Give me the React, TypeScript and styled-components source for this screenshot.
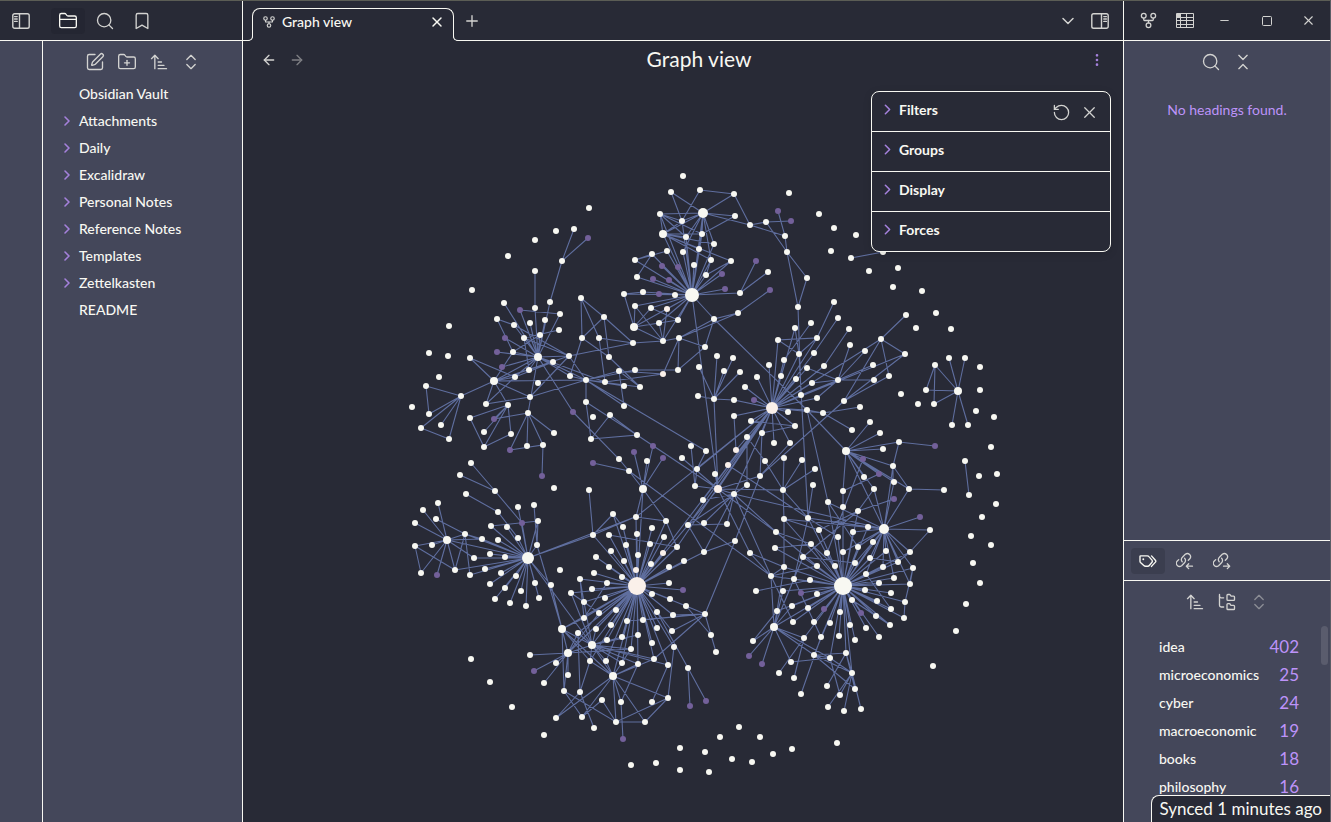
import React from "react";
import styled, { createGlobalStyle } from "styled-components";
import {
  ArrowLeft,
  ArrowRight,
  ArrowUpNarrowWide,
  Bookmark,
  ChevronDown,
  ChevronRight,
  ChevronsDownUp,
  ChevronsUpDown,
  EllipsisVertical,
  FolderClosed,
  FolderPlus,
  FolderTree,
  GitFork,
  Minus,
  Plus,
  RotateCcw,
  Search,
  Square,
  SquarePen,
  X,
} from "lucide-react";

const color = {
  dark: "#282a36",
  panel: "#44475a",
  line: "#f8f8f2",
  text: "#f8f8f2",
  icon: "#d3d3d1",
  accent: "#bd93f9",
  chevron: "#a581dc",
  edge: "#6272a4",
  ghost: "#73609a",
  blush: "#faf0ea",
};

const GlobalStyle = createGlobalStyle`
  *, *::before, *::after { box-sizing: border-box; }
  body {
    margin: 0;
    background: ${color.dark};
    color: ${color.text};
    font-family: Lato, "Open Sans", sans-serif;
    font-size: 14px;
    line-height: 20px;
  }
  button { font: inherit; color: inherit; background: none; border: 0; padding: 0; cursor: pointer; }
  ul { list-style: none; margin: 0; padding: 0; }
`;

const Window = styled.div`
  display: flex;
  height: 100vh;
  min-height: 600px;
  position: relative;
  overflow: hidden;
  border-top: 1px solid #5b5d55;
  border-right: 1px solid #5b5d66;
`;

const LeftSide = styled.aside`
  display: flex;
  flex-direction: column;
  flex: 0 0 243px;
  border-right: 1px solid ${color.line};
  background: ${color.panel};
`;

const RightSide = styled.aside`
  display: flex;
  flex-direction: column;
  flex: 0 0 207px;
  min-width: 0;
  border-left: 1px solid ${color.line};
  background: ${color.panel};
`;

const Main = styled.main`
  display: flex;
  flex-direction: column;
  flex: 1;
  min-width: 0;
  position: relative;
`;

const Bar = styled.div<{ $pad?: string; $plain?: boolean }>`
  display: flex;
  align-items: center;
  flex: 0 0 40px;
  gap: 3px;
  padding: ${(p) => p.$pad ?? "0 4px"};
  border-bottom: 1px solid ${color.line};
  background: ${(p) => (p.$plain ? "transparent" : color.dark)};
`;

const Spacer = styled.span<{ $w?: number }>`
  flex: ${(p) => (p.$w ? `0 0 ${p.$w}px` : "1")};
`;

const IconButton = styled.button<{ $w?: number; $active?: boolean; $dim?: boolean; $tone?: string }>`
  display: inline-flex;
  align-items: center;
  justify-content: center;
  flex: 0 0 ${(p) => p.$w ?? 34}px;
  height: 26px;
  border-radius: 4px;
  color: ${(p) => p.$tone ?? (p.$active ? color.text : color.icon)};
  background: ${(p) => (p.$active ? "rgba(24, 24, 32, 0.18)" : "transparent")};
  opacity: ${(p) => (p.$dim ? 0.5 : 1)};
`;

const LeftBody = styled.div`
  display: flex;
  flex: 1;
`;

const Ribbon = styled.div`
  flex: 0 0 43px;
  border-right: 1px solid ${color.line};
`;

const Explorer = styled.nav`
  flex: 1;
`;

const Toolbar = styled.div`
  display: flex;
  justify-content: center;
  padding: 8px 0 5px;
`;

const TreeRow = styled.button`
  display: flex;
  align-items: center;
  width: 100%;
  height: 27px;
  padding-left: 16px;
  font-weight: 500;
  text-align: left;
`;

const Twisty = styled.span`
  display: flex;
  flex: 0 0 20px;
  color: ${color.chevron};
`;

const Tab = styled.div`
  display: flex;
  align-items: center;
  align-self: flex-end;
  position: relative;
  flex: 0 1 202px;
  height: 33px;
  margin: 0 0 -1px 9px;
  padding: 0 7px 6px 9px;
  border: 1px solid ${color.line};
  border-bottom: 0;
  border-radius: 8px 8px 0 0;
  background: ${color.dark};
  font-weight: 500;
  &::before,
  &::after {
    content: "";
    position: absolute;
    bottom: 0;
    width: 8px;
    height: 8px;
    border: 0 solid ${color.line};
    border-bottom-width: 1px;
    clip-path: inset(0);
  }
  &::before {
    left: -8px;
    border-right-width: 1px;
    border-bottom-right-radius: 5px;
    box-shadow: 3px 3px 0 0 ${color.dark};
  }
  &::after {
    right: -8px;
    border-left-width: 1px;
    border-bottom-left-radius: 5px;
    box-shadow: -3px 3px 0 0 ${color.dark};
  }
`;

const TabTitle = styled.span`
  flex: 1;
  padding-left: 6px;
`;

const ViewHeader = styled.header`
  display: flex;
  align-items: center;
  flex: 0 0 38px;
  padding: 0 12px;
`;

const ViewTitle = styled.h1`
  flex: 1;
  margin: 0;
  padding: 0 0 2px 4px;
  font-size: 21px;
  line-height: 28px;
  font-weight: 400;
  text-align: center;
`;

const Nav = styled.div`
  display: flex;
`;

const Canvas = styled.svg`
  display: block;
  flex: 1;
  width: 100%;
  min-height: 0;
`;

const Controls = styled.section`
  position: absolute;
  top: 90px;
  right: 12px;
  width: 240px;
  border: 1px solid ${color.line};
  border-radius: 8px;
  background: ${color.dark};
  box-shadow: 0 2px 8px rgba(0, 0, 0, 0.12);
`;

const ControlRow = styled.div`
  display: flex;
  align-items: center;
  height: 40px;
  padding: 0 7px 4px;
  & + & {
    border-top: 1px solid ${color.line};
  }
  &:first-child {
    height: 39px;
  }
`;

const ControlToggle = styled.button`
  display: flex;
  align-items: center;
  flex: 1;
  font-weight: 700;
  text-align: left;
`;

const ControlActions = styled.div`
  display: flex;
  padding-top: 6px;
`;

const Outline = styled.section`
  flex: 1;
  min-height: 0;
`;

const Empty = styled.p`
  margin: 20px 0 0;
  text-align: center;
  color: ${color.accent};
`;

const TagPane = styled.section`
  display: flex;
  flex-direction: column;
  flex: 0 0 282px;
  min-height: 0;
  border-top: 1px solid ${color.line};
`;

const TagScroll = styled.div`
  display: flex;
  flex: 1;
  min-height: 0;
  overflow: hidden;
  padding-top: 6px;
`;

const TagList = styled.ul`
  flex: 1;
  padding: 7px 22px 0 35px;
`;

const TagRow = styled.li`
  display: flex;
  align-items: center;
  justify-content: space-between;
  height: 28px;
  font-weight: 500;
`;

const Count = styled.span`
  font-size: 17px;
  font-weight: 400;
  color: ${color.accent};
`;

const Thumb = styled.div`
  flex: 0 0 7px;
  height: 39px;
  margin-right: 2px;
  border-radius: 4px;
  background: #5a5c6d;
`;

const Status = styled.footer`
  position: absolute;
  right: 0;
  bottom: 0;
  height: 27px;
  padding: 0 8px 0 7px;
  border: 1px solid ${color.line};
  border-width: 1px 0 0 1px;
  border-top-left-radius: 8px;
  background: ${color.dark};
  font-size: 17px;
  line-height: 26px;
`;

const outline = { fill: "none", stroke: "currentColor", strokeLinecap: "round", strokeLinejoin: "round" } as const;

const SidebarIcon = ({ flip }: { flip?: boolean }) => (
  <svg width="18" height="16" viewBox="0 0 18 16" {...outline} strokeWidth="1.4" aria-hidden>
    <g transform={flip ? "matrix(-1 0 0 1 18 0)" : undefined}>
      <rect x="0.8" y="0.8" width="16.4" height="14.4" rx="1.8" />
      <path d="M7.5 1v14M2.6 3.6h2.6M2.6 6h2.6M2.6 8.4h2.6" />
    </g>
  </svg>
);

const TableIcon = () => (
  <svg width="18" height="15" viewBox="0 0 18 15" fill="none" stroke="currentColor" strokeWidth="1" aria-hidden>
    <path d="M.5.5h17v14H.5zM.5 4.5h17M.5 7.5h17M.5 11.5h17M4.5.5v14M10.5.5v14" />
    <path d="M1 1h3v3H1z" fill="currentColor" />
  </svg>
);

const TagsIcon = () => (
  <svg width="18" height="14" viewBox="0 0 18 14" {...outline} strokeWidth="1.4" aria-hidden>
    <path d="M1 2.6v4.6c0 .5.2.9.5 1.2l3.3 3.1c.5.5 1.1.7 1.8.7h2.2c.6 0 1.1-.2 1.5-.7L13 8.2c.5-.6.5-1.5 0-2.1L9.9 2.6c-.4-.5-.9-.7-1.500-.7H1.700c-.4 0-.7.300-.7.700z" />
    <path d="M12.500 1.900l3.900 4.300c.5.600.5 1.300 0 1.900l-3.900 4.300" />
    <path d="M4.300 5.200v.1" strokeWidth="1.900" />
  </svg>
);

const LinkIcon = ({ out }: { out?: boolean }) => (
  <svg width="18" height="18" viewBox="0 0 18 18" {...outline} strokeWidth="1.3" aria-hidden>
    <path d="M6.200 9.800a3.200 3.200 0 0 1 .2-4.600l2.900-2.900a3.200 3.200 0 0 1 4.500 4.500l-1.500 1.500" />
    <path d="M8.600 6.200a3.200 3.200 0 0 1-.1 4.600l-2.900 2.900a3.200 3.200 0 0 1-4.500-4.500l1.600-1.600" />
    <path d={out ? "M10.500 14.200h6M14.300 11.800l2.400 2.400-2.400 2.400" : "M16.500 14.200h-6M12.700 11.800l-2.400 2.400 2.400 2.400"} />
  </svg>
);

const folders = ["Attachments", "Daily", "Excalidraw", "Personal Notes", "Reference Notes", "Templates", "Zettelkasten"];

const tags: [string, number][] = [
  ["idea", 402],
  ["microeconomics", 25],
  ["cyber", 24],
  ["macroeconomic", 19],
  ["books", 18],
  ["philosophy", 16],
];

/* Notes, as "x,y" pairs in graph space */
const notes = `
535,240 508,256 562,261 535,271 472,290 550,302 504,303 535,308 560,314 497,319 545,320 530,323 514,325 449,326 559,330 540,335
524,338 581,298 604,317 582,338 599,338 633,343 609,357 569,356 513,352 553,362 429,353 448,356 470,358 529,370 439,377 515,377
538,383 570,376 605,382 619,371 635,370 624,386 640,387 426,386 461,396 412,407 429,414 421,428 441,425 449,439 486,404 508,405
530,397 528,413 470,418 484,432 511,434 484,447 527,446 543,445 554,433 586,402 593,417 610,415 624,406 637,435 591,439 619,459
629,471 471,463 460,475 574,229 556,231 589,208 683,176 671,192 700,190 734,194 660,214 735,216 682,221 702,234 686,237 750,225
766,222 789,193 819,214 834,228 831,251 785,236 787,252 714,244 699,249 683,252 667,251 652,254 635,260 694,265 711,260 731,261
706,275 637,277 675,295 643,292 624,294 740,293 768,272 807,278 798,307 635,306 651,308 659,323 678,320 663,341 679,338 714,319
738,313 705,347 678,370 699,367 717,356 733,358 724,371 740,372 698,396 714,399 734,400 745,387 757,377 769,365 778,340 781,376
784,360 795,328 799,354 811,323 796,379 801,395 807,368 812,383 814,353 817,338 824,366 817,398 834,302 838,318 734,416 751,421
788,412 807,410 823,413 795,426 762,433 747,437 774,443 790,443 691,446 706,451 682,458 765,461 784,458 802,460 815,469 697,469
715,474 760,476 695,486 747,485 813,485 703,500 828,502 647,461 613,514 636,517 666,521 623,527 652,528 688,525 704,523 727,524
784,519 819,530 776,532 609,535 637,534 664,537 626,545 650,544 611,551 638,555 677,547 735,541 704,552 750,553 775,548 811,544
803,557 827,553 838,537 817,566 784,567 835,566 771,576 794,579 684,561 669,567 651,564 624,561 609,567 622,577 495,491 466,494
498,512 554,488 438,503 423,510 415,523 436,519 465,534 415,546 432,545 421,573 455,570 470,575 474,558 482,539 491,526 507,527
518,507 534,505 538,521 518,538 498,540 537,545 490,554 505,557 485,569 501,573 516,576 535,583 551,585 490,584 505,588 521,591
495,599 510,603 526,606 539,598 589,490 593,535 596,557 594,573 580,579 560,570 607,583 592,589 571,593 605,598 584,602 616,610
599,613 584,618 627,621 611,625 596,629 578,633 607,640 622,637 638,635 631,649 590,661 606,661 622,663 638,664 530,655 556,663
544,683 568,675 564,691 580,692 602,700 621,702 582,717 556,718 594,728 616,722 471,659 490,682 512,707 544,735 669,583 652,594
670,599 686,606 657,612 673,615 705,614 643,620 657,628 672,631 711,635 716,652 652,643 674,647 654,659 668,665 688,668 652,702
668,698 645,722 739,727 720,737 760,737 680,748 705,752 792,749 773,754 732,759 752,762 656,763 631,765 680,770 709,772 756,591
856,235 851,258 883,252 898,268 869,271 893,287 922,291 849,329 936,313 951,329 916,328 906,315 881,339 905,354 889,376 850,345
865,351 873,365 874,380 844,401 860,407 852,430 901,394 918,404 934,404 926,390 935,365 949,358 965,358 980,367 980,390 976,411
994,417 952,425 968,425 991,447 870,422 880,433 883,449 899,442 893,466 864,477 965,461 979,476 997,474 843,491 874,489 894,482
909,489 944,490 930,530 843,507 858,511 853,532 868,527 843,552 858,547 873,542 886,551 870,558 855,563 883,567 898,562 910,552
913,568 894,578 910,584 866,574 879,583 810,580 783,591 817,594 865,590 852,600 877,601 891,593 905,602 891,609 904,618 876,616
890,625 808,608 792,606 777,611 793,622 814,622 830,623 840,612 850,625 866,628 879,637 855,640 839,636 821,637 804,638 753,641
791,662 779,673 794,678 801,694 814,655 830,658 846,653 852,673 855,689 827,686 840,695 828,707 844,711 861,709 969,495 996,504
982,517 971,536 991,545 973,563 980,583 966,604 956,631 933,666 837,743`;

const ghosts = `
588,238 520,310 505,338 497,352 502,367 494,419 510,450 573,412 634,452 593,463 542,476 778,211 791,221 662,266 678,267 722,274
653,279 669,280 659,294 725,289 756,261 770,290 754,400 653,446 663,458 522,523 437,575 534,671 623,739 683,590 690,706 706,701
935,446 863,459 879,474 894,499 920,517 801,593 861,613 824,609 749,656 762,664`;

const blushNotes = "667,309 663,374 736,450 728,465 663,553 636,570";

const hubs: [number, number, number, boolean?][] = [
  [703, 213, 5], [692, 295, 7], [663, 234, 4], [634, 327, 4], [538, 357, 4], [494, 381, 4], [586, 380, 3], [838, 380, 3],
  [958, 391, 4], [846, 451, 4], [643, 489, 4], [734, 494, 3], [783, 490, 3], [808, 518, 3], [447, 540, 4], [528, 558, 6],
  [884, 529, 5], [843, 586, 9], [562, 629, 4], [592, 645, 4], [568, 653, 4], [613, 676, 4], [774, 627, 4],
  [772, 408, 6, true], [718, 489, 4, true], [637, 586, 9, true],
];

/* First point is the hub, the others are linked to it */
const fans = [
  "562,261 574,229 588,238 550,302",
  "538,357 550,302 535,308 504,303 520,310 560,314 545,320 530,323 514,325 540,335 524,338 505,338 497,352 513,352 569,356 553,362 570,376 586,380 529,370 502,367 494,381 573,412 528,413 605,382 515,377",
  "494,381 513,352 461,396 486,404 508,405 470,358 530,397 586,380 553,362 569,356 515,377",
  "508,405 470,418 484,432 484,447 511,434 494,419",
  "528,413 510,450 527,446 543,445 554,433 494,419",
  "461,396 426,386 429,414 421,428 441,425 449,439",
  "586,380 605,382 619,371 624,386 640,387 635,370 624,406 586,402 570,376 569,356 706,451",
  "692,295 703,213 663,234 682,221 702,234 686,237 714,244 699,249 683,252 667,251 652,254 635,260 662,266 678,267 694,265 711,260 731,261 722,274 706,275 637,277 653,279 669,280 659,294 675,295 643,292 624,294 725,289 740,293 635,306 651,308 667,309 659,323 678,320 634,327 663,341 714,319 718,489 660,214",
  "703,213 671,192 734,194 735,216 750,225 660,214 682,221 663,234 702,234 686,237 699,249 711,260 714,244 683,252",
  "663,234 660,214 682,221 686,237 702,234 714,244 699,249 711,260 731,261",
  "660,214 682,221 702,234 686,237",
  "634,327 659,323 678,320 651,308 663,341 635,306 624,294",
  "679,338 714,319 738,313 705,347 678,370 663,374 663,341",
  "714,399 717,356 733,358 724,371 740,372 699,367 698,396 734,400 718,489",
  "772,408 745,387 757,377 769,365 778,340 781,376 784,360 795,328 799,354 796,379 801,395 807,368 812,383 814,353 817,338 824,366 838,380 817,398 734,400 788,412 807,410 823,413 795,426 790,443 774,443 762,433 751,421 734,416 747,437 754,400 718,489 734,494 703,500 637,586 688,525 677,547 697,469 728,465 736,450 636,517 905,354 881,339",
  "643,489 634,452 653,446 647,461 663,458 629,471 666,521 637,586 636,517",
  "718,489 695,486 734,494 783,490 715,474 682,458 750,553 776,532 637,586 760,476",
  "734,494 704,523 727,524 704,552 703,500 688,525 884,529 771,576 747,485 776,532",
  "783,490 765,461 784,458 802,460 815,469 784,519 808,518",
  "838,380 850,345 865,351 873,365 874,380 817,398 801,395 807,368 812,383",
  "844,401 881,339 889,376 905,354 760,476",
  "881,339 906,315 905,354 889,376",
  "807,410 846,451 828,502 714,319 823,413",
  "823,413 860,407 852,430",
  "958,391 935,365 949,358 965,358 926,390 934,404 952,425 968,425",
  "846,451 870,422 880,433 883,449 899,442 863,459 893,466 879,474 864,477 874,489 894,482 909,489 843,491",
  "447,540 438,503 423,510 415,523 465,534 415,546 432,545 421,573 437,575 455,570 482,539 528,558 474,558",
  "465,534 436,519 455,570 470,575 482,539 528,558",
  "528,558 491,526 507,527 518,538 522,523 518,507 538,521 498,540 490,554 505,557 474,558 485,569 501,573 516,576 535,583 551,585 490,584 505,588 521,591 495,599 510,603 526,606 539,598 455,570 470,575 537,545 593,535 635,517 592,645 482,539",
  "593,535 635,517 589,490 613,514 637,586",
  "562,629 564,691 568,653 592,645 613,676 551,585 537,545 637,586 590,661",
  "568,653 530,655 556,663 534,671 544,683 564,691 578,633 568,675 592,645 637,586 607,640 599,613 631,649",
  "592,645 590,661 606,661 622,663 631,649 638,635 622,637 584,602 571,593 613,676 596,629 638,664 654,659 668,665 578,633 607,640",
  "613,676 590,661 556,718 582,717 616,722 621,702 645,722 668,698 638,664 606,661 637,586 631,649 654,659",
  "705,614 673,615 686,606 711,635 672,631 643,620 654,659 735,541 627,621",
  "637,586 636,517 613,514 623,527 652,528 609,535 637,534 664,537 626,545 650,544 611,551 638,555 663,553 677,547 684,561 669,567 651,564 624,561 609,567 622,577 636,570 596,557 594,573 607,583 592,589 571,593 605,598 584,602 616,610 599,613 584,618 627,621 611,625 596,629 578,633 607,640 622,637 638,635 631,649 590,661 606,661 622,663 638,664 669,583 683,590 652,594 670,599 686,606 657,612 673,615 643,620 657,628 672,631 652,643 674,647 654,659 668,665 580,579 592,645 704,552 666,521",
  "884,529 920,517 930,530 868,527 873,542 858,547 886,551 870,558 898,562 910,552 913,568 883,567 894,578 855,563 874,489 893,466 894,482 909,489 808,518 846,451 843,552 853,532 910,584 866,574 827,502 784,519",
  "843,586 784,567 794,579 810,580 783,591 801,593 817,594 865,590 852,600 877,601 891,593 905,602 891,609 904,618 876,616 890,625 861,613 824,609 808,608 792,606 793,622 814,622 830,623 840,612 850,625 866,628 879,637 855,640 839,636 821,637 804,638 910,584 913,568 894,578 866,574 879,583 883,567 898,562 910,552 886,551 870,558 855,563 873,542 858,547 843,552 827,553 838,537 853,532 868,527 835,566 817,566 803,557 811,544 808,518 819,530 771,576 777,611 774,627 884,529 814,655 830,658 846,653 852,673 775,548 843,507 843,491 784,519 858,511",
  "774,627 753,641 749,656 762,664 791,662 804,638 777,611 783,591 814,655 830,658 792,606 794,579 803,557 771,576",
  "852,673 846,653 830,658 814,655 844,711 828,707 861,709 840,695",
];

/* Runs of notes linked one after the other */
const chains = [
  "535,271 535,308", "520,310 560,314", "514,325 497,319 513,352 540,335", "514,325 569,356 524,338 559,330", "524,338 529,370",
  "470,358 515,377", "515,377 486,404 530,397 586,380", "515,377 553,362", "530,397 569,356", "470,418 484,447 511,434",
  "510,450 543,445 542,476", "426,386 429,414", "421,428 449,439", "582,338 581,298 604,317 582,338 609,357 604,317 633,343",
  "581,298 599,338 633,343", "582,338 570,376", "599,338 605,382", "569,356 633,343 663,341", "609,357 640,387 619,371 624,406",
  "586,402 637,435 591,439 586,402", "591,439 610,415 637,435 718,489", "573,412 619,459 629,471 771,576", "593,463 629,471",
  "663,374 605,382", "619,371 663,374", "635,370 678,370 705,347 714,319 738,313 770,290", "671,192 682,221 700,190 734,194 750,225 785,236",
  "735,216 702,234", "750,225 766,222 791,221", "766,222 787,252 785,236 778,211", "787,252 807,278 798,307 787,252",
  "798,307 801,395", "795,328 799,354 808,518", "667,251 635,260 652,254 637,277", "756,261 740,293 768,272", "711,260 706,275 731,261",
  "624,294 643,292", "659,323 663,341 667,309", "651,308 678,320", "635,306 663,341", "799,354 778,340 817,338 799,354",
  "834,302 817,338", "838,318 814,353", "849,329 824,366", "811,323 784,360", "691,446 695,486 697,469 706,451",
  "747,437 747,485", "747,437 765,461", "762,433 760,476 790,443", "762,433 795,426 751,421", "734,416 736,450",
  "760,476 735,541", "728,465 808,518", "784,519 784,567 771,576 750,553 784,567", "688,525 727,524", "688,525 704,552 735,541",
  "636,517 666,521 677,547", "609,535 677,547", "613,514 623,527", "471,463 495,491 460,475", "495,491 522,523", "466,494 498,512 518,538",
  "415,546 421,573", "415,546 455,570", "491,526 538,521 537,545 534,505", "578,633 580,692 594,728", "580,579 584,618 607,583",
  "571,593 584,602 599,613", "580,579 584,602", "584,618 562,629", "582,717 564,691 616,722 668,698 645,722 616,722 602,700 582,717",
  "556,718 580,692 590,661", "621,702 623,739", "621,702 638,664", "711,635 716,652", "686,606 711,635", "657,612 688,668 690,706", "688,668 706,701",
  "674,647 668,698", "668,665 652,702", "613,676 668,698", "851,258 883,252", "926,390 935,365 934,404", "935,446 899,442 893,466 909,489 944,490",
  "909,489 884,529", "893,466 893,482", "863,459 827,553", "879,474 843,491", "874,489 858,511 803,557", "894,499 858,511 819,530",
  "930,530 910,552", "913,568 905,602 904,618", "913,568 910,584", "965,461 969,495", "813,485 808,518 794,579", "828,502 858,547",
  "776,532 811,544", "775,548 811,544 835,566", "776,532 817,566", "784,519 819,530", "756,591 810,580", "771,576 817,566",
  "771,576 793,622", "794,579 821,637", "753,641 777,611 784,567", "791,662 830,658 814,655 846,653 827,686", "779,673 804,638 794,678",
  "801,694 821,637", "846,653 855,689 852,673", "814,655 855,689", "843,586 852,673", "830,658 840,695", "910,552 898,562 870,558",
  "808,518 868,527", "808,518 838,537", "828,502 843,586", "876,616 852,600 890,625", "866,574 891,609", "855,563 803,557",
];

const points = (text: string) => text.trim().split(/\s+/).map((p) => p.split(",").map(Number));

const fanPath = (text: string) => {
  const [hub, ...rest] = points(text);
  return rest.map(([x, y]) => `M${hub[0]} ${hub[1]}L${x} ${y}`).join("");
};

const chainPath = (text: string) => "M" + points(text).map((p) => p.join(" ")).join("L");

const edgePath = fans.map(fanPath).join("") + chains.map(chainPath).join("");

const Dots = ({ at, fill }: { at: string; fill: string }) => (
  <g fill={fill}>
    {points(at).map(([x, y], i) => (
      <circle key={i} cx={x} cy={y} r={3} />
    ))}
  </g>
);

const Graph = () => (
  <Canvas viewBox="243 79 880 743" role="img" aria-label="Graph of linked notes">
    <path d={edgePath} fill="none" stroke={color.edge} strokeWidth="1.1" strokeOpacity="0.95" />
    <Dots at={ghosts} fill={color.ghost} />
    <Dots at={notes} fill={color.text} />
    <Dots at={blushNotes} fill={color.blush} />
    {hubs.map(([x, y, r, blush]) => (
      <circle key={`${x}-${y}`} cx={x} cy={y} r={r} fill={blush ? color.blush : color.text} />
    ))}
  </Canvas>
);

const stroke = { size: 20, strokeWidth: 1.6 };

export default function App() {
  return (
    <>
      <GlobalStyle />
      <Window>
        <LeftSide>
          <Bar>
            <IconButton aria-label="Collapse sidebar"><SidebarIcon /></IconButton>
            <Spacer $w={7} />
            <IconButton aria-label="Files" $active><FolderClosed {...stroke} /></IconButton>
            <IconButton aria-label="Search"><Search {...stroke} /></IconButton>
            <IconButton aria-label="Bookmarks"><Bookmark {...stroke} /></IconButton>
          </Bar>
          <LeftBody>
            <Ribbon />
            <Explorer aria-label="File explorer">
              <Toolbar>
                <IconButton $w={32} aria-label="New note"><SquarePen {...stroke} /></IconButton>
                <IconButton $w={32} aria-label="New folder"><FolderPlus {...stroke} /></IconButton>
                <IconButton $w={32} aria-label="Change sort order"><ArrowUpNarrowWide {...stroke} /></IconButton>
                <IconButton $w={32} aria-label="Expand all"><ChevronsUpDown {...stroke} /></IconButton>
              </Toolbar>
              <TreeRow><Twisty />Obsidian Vault</TreeRow>
              {folders.map((name) => (
                <TreeRow key={name}>
                  <Twisty><ChevronRight size={16} strokeWidth={2.4} /></Twisty>
                  {name}
                </TreeRow>
              ))}
              <TreeRow><Twisty />README</TreeRow>
            </Explorer>
          </LeftBody>
        </LeftSide>

        <Main>
          <Bar $pad="0 6px 0 0">
            <Tab>
              <GitFork size={14} strokeWidth={2} color={color.icon} />
              <TabTitle>Graph view</TabTitle>
              <IconButton $w={18} $tone={color.text} aria-label="Close tab"><X size={16} strokeWidth={2.2} /></IconButton>
            </Tab>
            <IconButton $w={30} aria-label="New tab"><Plus size={18} strokeWidth={1.8} /></IconButton>
            <Spacer />
            <IconButton $w={24} aria-label="Tab list"><ChevronDown size={20} strokeWidth={1.8} /></IconButton>
            <IconButton aria-label="Expand sidebar"><SidebarIcon flip /></IconButton>
          </Bar>
          <ViewHeader>
            <Nav>
              <IconButton $w={28} aria-label="Back"><ArrowLeft size={16} strokeWidth={2} /></IconButton>
              <IconButton $w={28} $dim aria-label="Forward"><ArrowRight size={16} strokeWidth={2} /></IconButton>
            </Nav>
            <ViewTitle>Graph view</ViewTitle>
            <Nav>
              <IconButton $w={28} $tone={color.chevron} aria-label="More options"><EllipsisVertical size={16} strokeWidth={2} /></IconButton>
            </Nav>
          </ViewHeader>
          <Graph />
          <Controls aria-label="Graph settings">
            {["Filters", "Groups", "Display", "Forces"].map((name, i) => (
              <ControlRow key={name}>
                <ControlToggle>
                  <Twisty><ChevronRight size={17} strokeWidth={2.2} /></Twisty>
                  {name}
                </ControlToggle>
                {i === 0 && (
                  <ControlActions>
                    <IconButton $w={28} aria-label="Restore defaults"><RotateCcw size={19} strokeWidth={1.6} /></IconButton>
                    <IconButton $w={28} aria-label="Close settings"><X size={19} strokeWidth={1.6} /></IconButton>
                  </ControlActions>
                )}
              </ControlRow>
            ))}
          </Controls>
        </Main>

        <RightSide>
          <Bar $pad="0 0 0 7px">
            <IconButton aria-label="Local graph"><GitFork {...stroke} size={19} /></IconButton>
            <IconButton aria-label="Table"><TableIcon /></IconButton>
            <IconButton $w={39} aria-label="Minimize"><Minus size={13} strokeWidth={1.8} /></IconButton>
            <IconButton $w={39} aria-label="Maximize"><Square size={12} strokeWidth={2} /></IconButton>
            <IconButton $w={39} aria-label="Close"><X size={15} strokeWidth={1.8} /></IconButton>
          </Bar>
          <Outline>
            <Toolbar>
              <IconButton $w={32} aria-label="Search headings"><Search {...stroke} /></IconButton>
              <IconButton $w={32} aria-label="Collapse all"><ChevronsDownUp {...stroke} /></IconButton>
            </Toolbar>
            <Empty>No headings found.</Empty>
          </Outline>
          <TagPane>
            <Bar $plain $pad="0 7px">
              <IconButton $active aria-label="Tags"><TagsIcon /></IconButton>
              <IconButton aria-label="Backlinks"><LinkIcon /></IconButton>
              <IconButton aria-label="Outgoing links"><LinkIcon out /></IconButton>
            </Bar>
            <Toolbar>
              <IconButton $w={32} aria-label="Sort tags"><ArrowUpNarrowWide {...stroke} /></IconButton>
              <IconButton $w={32} aria-label="Nested tags"><FolderTree {...stroke} /></IconButton>
              <IconButton $w={32} $dim aria-label="Expand tags"><ChevronsUpDown {...stroke} /></IconButton>
            </Toolbar>
            <TagScroll>
              <TagList>
                {tags.map(([name, count]) => (
                  <TagRow key={name}>
                    {name}
                    <Count>{count}</Count>
                  </TagRow>
                ))}
              </TagList>
              <Thumb />
            </TagScroll>
          </TagPane>
        </RightSide>
        <Status>Synced 1 minutes ago</Status>
      </Window>
    </>
  );
}
